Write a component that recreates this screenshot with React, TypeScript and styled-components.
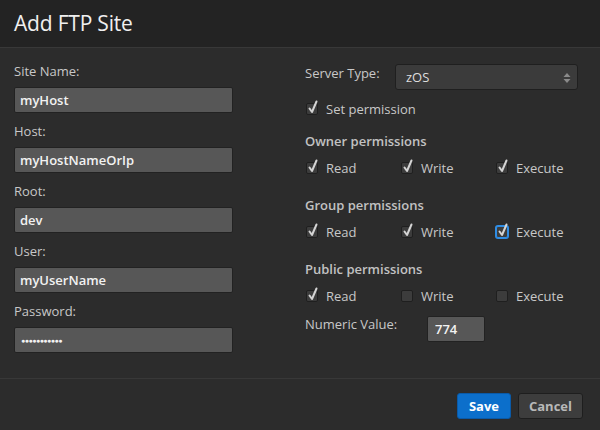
import React from 'react';
import styled, { createGlobalStyle } from 'styled-components';

const GlobalStyle = createGlobalStyle`
  html, body {
    margin: 0;
    padding: 0;
    background: #2c2c2c;
  }
  * {
    box-sizing: border-box;
  }
`;

const Dialog = styled.div`
  width: 600px;
  height: 430px;
  display: flex;
  flex-direction: column;
  background: #2c2c2c;
  font-family: 'Open Sans', 'Noto Sans', sans-serif;
  font-size: 13px;
  color: #c8c8c8;
`;

const Header = styled.div`
  height: 48px;
  flex: none;
  display: flex;
  align-items: center;
  padding: 0 14px 1px;
  background: #232323;
  border-bottom: 1px solid #383838;
`;

const Title = styled.h1`
  margin: 0;
  font-size: 21px;
  font-weight: 400;
  color: #f0f0f0;
  letter-spacing: -0.2px;
`;

const Body = styled.div`
  flex: 1;
  display: grid;
  grid-template-columns: 305px 1fr;
  border-bottom: 1px solid #383838;
`;

const LeftColumn = styled.div`
  display: flex;
  flex-direction: column;
  padding: 16px 0 0 14px;
`;

const Field = styled.div`
  display: flex;
  flex-direction: column;
  margin-bottom: 11px;
`;

const Label = styled.label`
  height: 16px;
  line-height: 15px;
  margin-bottom: 7px;
  color: #c8c8c8;
`;

const TextInput = styled.input`
  width: 219px;
  height: 26px;
  padding: 0 5px;
  background: #575757;
  border: 1px solid #222;
  border-radius: 2px;
  color: #f2f2f2;
  font-family: inherit;
  font-size: 13px;
  font-weight: 600;
  outline: none;
`;

const PasswordInput = styled(TextInput)`
  font-size: 7px;
  letter-spacing: -0.5px;
  padding-left: 6px;
`;

const RightColumn = styled.div`
  display: flex;
  flex-direction: column;
  padding-top: 16px;
`;

const TypeRow = styled.div`
  display: flex;
  align-items: flex-start;
`;

const TypeLabel = styled.span`
  width: 90px;
  line-height: 18px;
`;

const SelectBox = styled.div`
  position: relative;
  width: 183px;
  height: 26px;
  display: flex;
  align-items: center;
  padding-left: 10px;
  background: #3b3b3b;
  border: 1px solid #1f1f1f;
  border-radius: 3px;
  color: #dedede;
`;

const Arrows = styled.svg`
  position: absolute;
  right: 6px;
  top: 7px;
`;

const CheckLine = styled.div<{ $gap: number }>`
  display: flex;
  align-items: center;
  height: 18px;
  margin-top: ${(p) => p.$gap}px;
`;

const SectionTitle = styled.div<{ $gap: number }>`
  height: 18px;
  line-height: 18px;
  margin-top: ${(p) => p.$gap}px;
  font-weight: 600;
  color: #c2c2c2;
`;

const CheckGrid = styled.div`
  display: grid;
  grid-template-columns: 95px 95px 95px;
  margin-top: 9px;
`;

const Option = styled.div`
  display: flex;
  align-items: center;
  height: 18px;
  padding-left: 1px;
`;

const Box = styled.span<{ $focused?: boolean }>`
  position: relative;
  width: 12px;
  height: 12px;
  flex: none;
  margin-right: 8px;
  background: #3c3c3c;
  border: 1px solid ${(p) => (p.$focused ? '#2f8de4' : '#1f1f1f')};
  border-radius: 2px;
  box-shadow: ${(p) => (p.$focused ? '0 0 0 1px #2f8de4' : 'none')};
`;

const Tick = styled.svg`
  position: absolute;
  left: 0px;
  top: -4px;
`;

const NumericRow = styled.div`
  display: flex;
  align-items: center;
  margin-top: 11px;
`;

const NumericLabel = styled.span`
  width: 122px;
  margin-top: -10px;
`;

const NumericInput = styled(TextInput)`
  width: 58px;
  padding-left: 7px;
`;

const Footer = styled.div`
  height: 51px;
  flex: none;
  display: flex;
  justify-content: flex-end;
  align-items: flex-start;
  gap: 7px;
  padding: 14px 17px 0 0;
`;

const Button = styled.button<{ $primary?: boolean }>`
  height: 26px;
  padding: 0 ${(p) => (p.$primary ? 11 : 10)}px;
  border-radius: 3px;
  border: 1px solid ${(p) => (p.$primary ? '#0a5aa8' : '#1e1e1e')};
  background: ${(p) => (p.$primary ? '#0c6fcb' : '#3d3d3d')};
  color: ${(p) => (p.$primary ? '#ffffff' : '#b8b8b8')};
  font-family: inherit;
  font-size: 13px;
  font-weight: 700;
`;

const Check: React.FC<{ checked?: boolean; focused?: boolean; label: string }> = ({
  checked,
  focused,
  label,
}) => (
  <Option>
    <Box $focused={focused}>
      {checked && (
        <Tick width="12" height="15" viewBox="0 0 12 15">
          <path d="M2.5 8.5 L5 12 L9.5 1.5" fill="none" stroke="#d4d4d4" strokeWidth="2" strokeLinecap="round" strokeLinejoin="round" />
        </Tick>
      )}
    </Box>
    {label}
  </Option>
);

const PermissionRow: React.FC<{ values: boolean[]; focusIndex?: number }> = ({ values, focusIndex }) => (
  <CheckGrid>
    {['Read', 'Write', 'Execute'].map((name, i) => (
      <Check key={name} label={name} checked={values[i]} focused={focusIndex === i} />
    ))}
  </CheckGrid>
);

const FIELDS = [
  { label: 'Site Name:', value: 'myHost' },
  { label: 'Host:', value: 'myHostNameOrIp' },
  { label: 'Root:', value: 'dev' },
  { label: 'User:', value: 'myUserName' },
];

const App: React.FC = () => (
  <>
    <GlobalStyle />
    <Dialog>
      <Header>
        <Title>Add FTP Site</Title>
      </Header>
      <Body>
        <LeftColumn>
          {FIELDS.map((f) => (
            <Field key={f.label}>
              <Label>{f.label}</Label>
              <TextInput readOnly value={f.value} />
            </Field>
          ))}
          <Field>
            <Label>Password:</Label>
            <PasswordInput readOnly value={'\u25CF'.repeat(11)} />
          </Field>
        </LeftColumn>
        <RightColumn>
          <TypeRow>
            <TypeLabel>Server Type:</TypeLabel>
            <SelectBox>
              zOS
              <Arrows width="8" height="12" viewBox="0 0 8 12">
                <path d="M4 1 L7.5 5 L0.5 5 Z" fill="#8a8a8a" />
                <path d="M0.5 7 L7.5 7 L4 11 Z" fill="#8a8a8a" />
              </Arrows>
            </SelectBox>
          </TypeRow>
          <CheckLine $gap={10}>
            <Check checked label="Set permission" />
          </CheckLine>
          <SectionTitle $gap={14}>Owner permissions</SectionTitle>
          <PermissionRow values={[true, true, true]} />
          <SectionTitle $gap={19}>Group permissions</SectionTitle>
          <PermissionRow values={[true, true, true]} focusIndex={2} />
          <SectionTitle $gap={19}>Public permissions</SectionTitle>
          <PermissionRow values={[true, false, false]} />
          <NumericRow>
            <NumericLabel>Numeric Value:</NumericLabel>
            <NumericInput readOnly value="774" />
          </NumericRow>
        </RightColumn>
      </Body>
      <Footer>
        <Button $primary>Save</Button>
        <Button>Cancel</Button>
      </Footer>
    </Dialog>
  </>
);

export default App;
